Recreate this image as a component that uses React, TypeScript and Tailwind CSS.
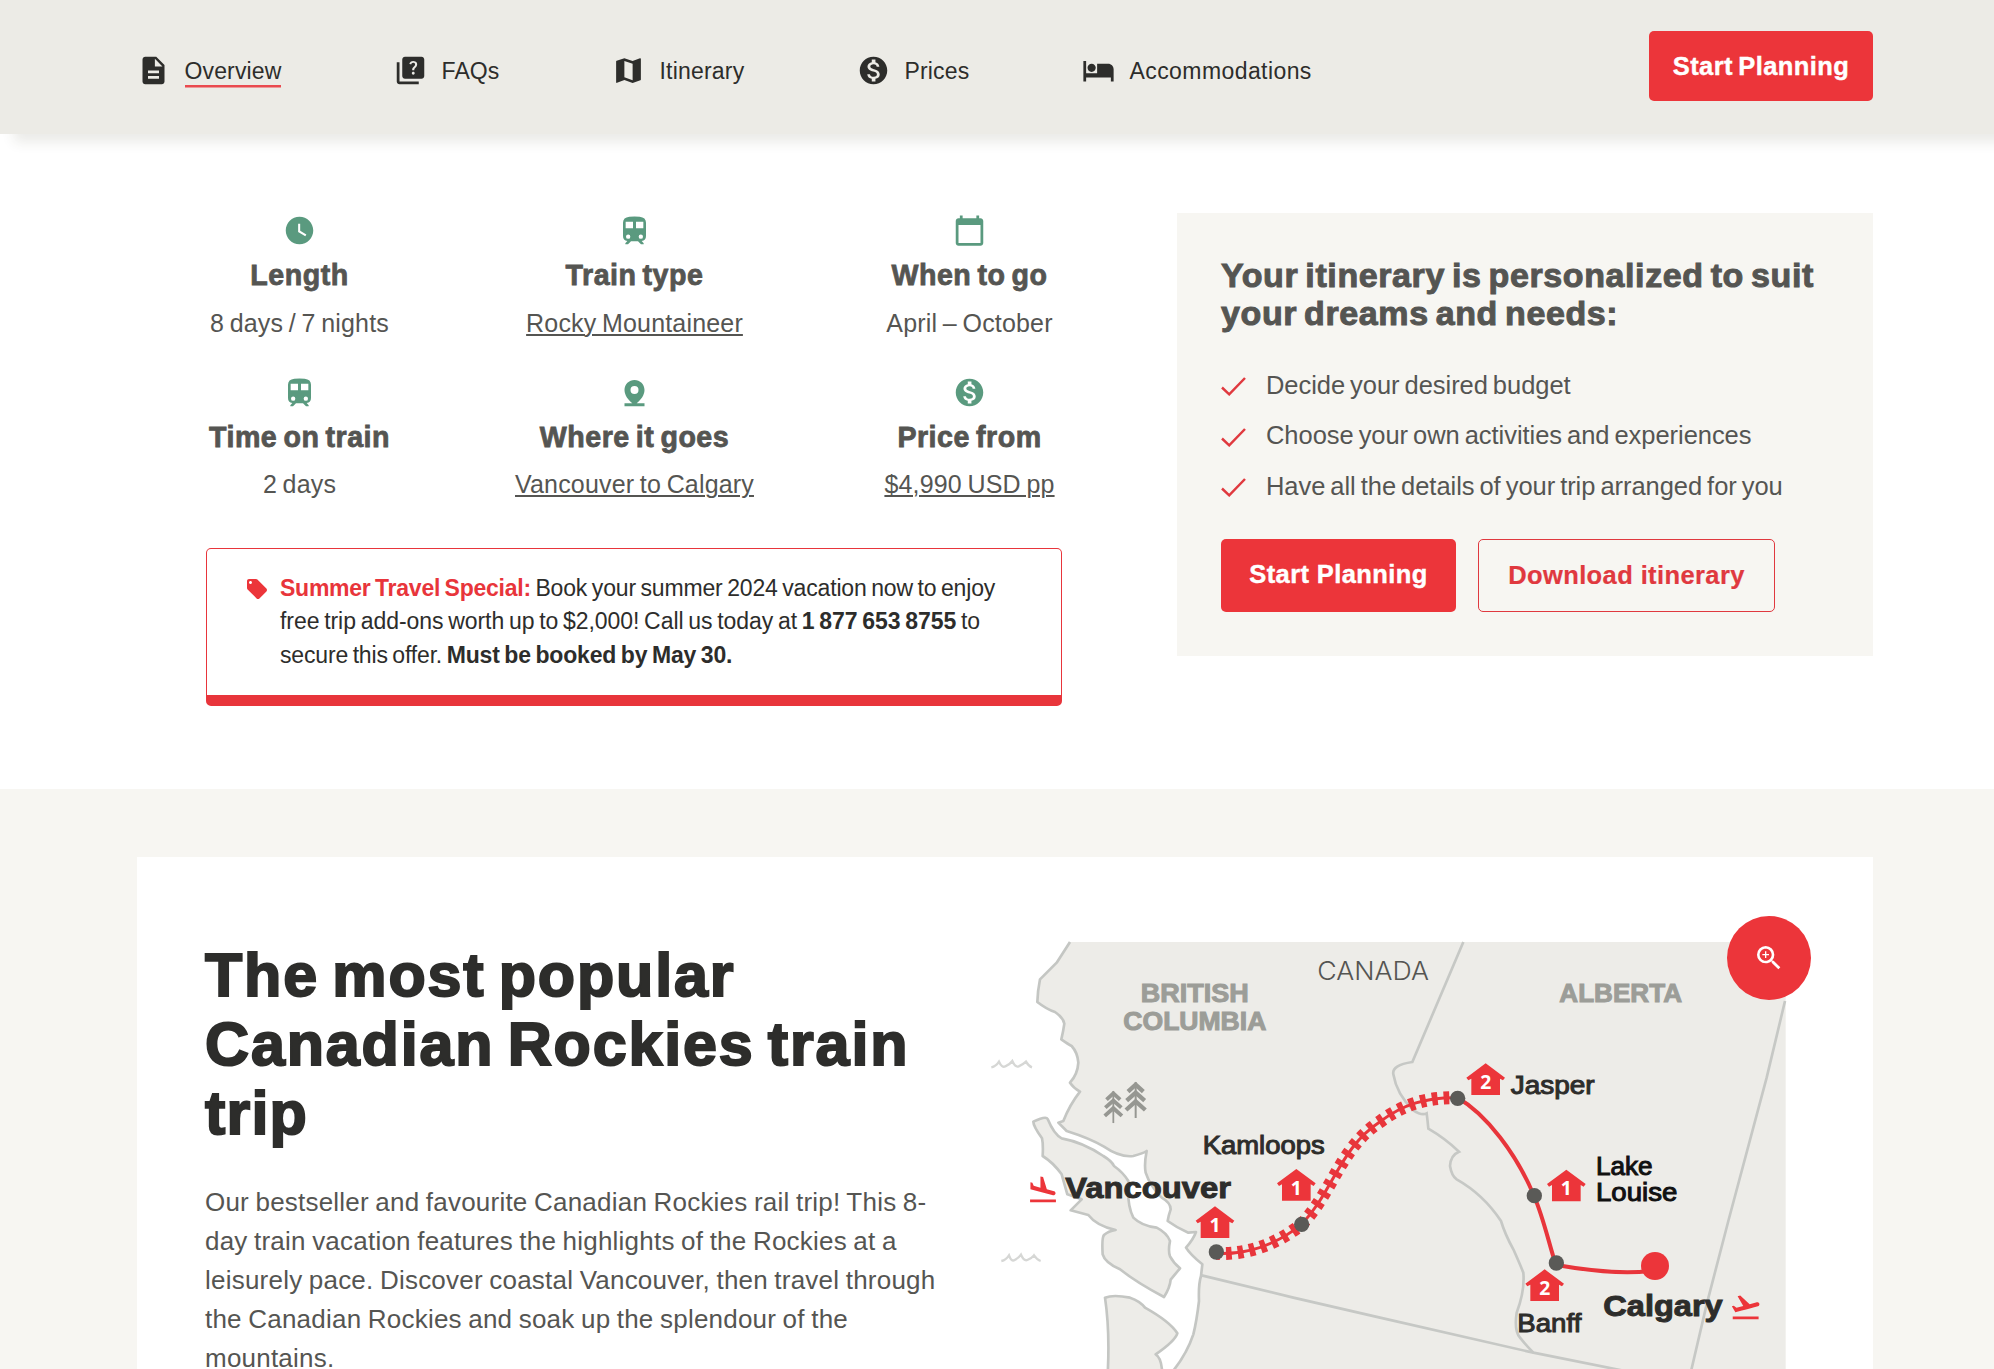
import {
  MdDescription, MdQuiz, MdMap, MdMonetizationOn, MdHotel, MdWatchLater,
  MdCalendarToday, MdLocalOffer, MdZoomIn, MdFlightLand, MdFlightTakeoff,
} from "react-icons/md";

const navItems = [
  { Icon: MdDescription, label: "Overview", cls: "tracking-[0.14px] shadow-[0_2.5px_0_#ea4a4f]" },
  { Icon: MdQuiz, label: "FAQs", cls: "tracking-[0.12px]" },
  { Icon: MdMap, label: "Itinerary", cls: "tracking-[0.2px]" },
  { Icon: MdMonetizationOn, label: "Prices", cls: "tracking-[0.2px]" },
  { Icon: MdHotel, label: "Accommodations", cls: "tracking-[0.42px]" },
];

function TrainIcon({ className }: { className?: string }) {
  return (
    <svg className={className} viewBox="0 0 99 99">
      <path
        fill="currentColor"
        fillRule="evenodd"
        d="M34 8 Q49.5 7 65 8 Q84 10 84 26 V66 Q84 80 71 81 L77 88 V91 H69 L60 82 H39 L30 91 H22 V88 L28 81 Q15 80 15 66 V26 Q15 10 34 8 Z M23 23 V43 H45 V23 Z M54 23 V43 H76 V23 Z M24 68 a6.5 6.5 0 1 0 13 0 a6.5 6.5 0 1 0 -13 0 Z M62 68 a6.5 6.5 0 1 0 13 0 a6.5 6.5 0 1 0 -13 0 Z"
      />
    </svg>
  );
}

function PinIcon({ className }: { className?: string }) {
  return (
    <svg className={className} viewBox="0 0 99 99">
      <path
        fill="currentColor"
        fillRule="evenodd"
        d="M49.5 12 C66 12 79.5 25 79.5 42 C79.5 58 68 72 56 82 H79.5 V91 H19.5 V82 H43 C31 72 19.5 58 19.5 42 C19.5 25 33 12 49.5 12 Z M37.5 42 a12 12 0 1 0 24 0 a12 12 0 1 0 -24 0 Z"
      />
    </svg>
  );
}

const facts = [
  { Icon: MdWatchLater, title: "Length", value: "8 days / 7 nights", link: false },
  { Icon: TrainIcon, title: "Train type", value: "Rocky Mountaineer", link: true },
  { Icon: MdCalendarToday, title: "When to go", value: "April – October", link: false },
  { Icon: TrainIcon, title: "Time on train", value: "2 days", link: false },
  { Icon: PinIcon, title: "Where it goes", value: "Vancouver to Calgary", link: true },
  { Icon: MdMonetizationOn, title: "Price from", value: "$4,990 USD pp", link: true },
];

const perks = [
  "Decide your desired budget",
  "Choose your own activities and experiences",
  "Have all the details of your trip arranged for you",
];

const COAST =
  "M270 123 L230 185 L180 235 Q173 270 172 303 Q200 325 225 333 Q250 350 253 368 Q250 390 244 415 Q265 430 275 435 Q293 455 295 485 Q293 520 270 545 Q280 560 300 572 Q270 610 250 660 L235 665 L260 690 Q330 712 372 737 Q420 770 460 765 Q490 757 500 750 Q492 790 497 815 Q510 855 545 890 Q572 905 572 925 Q565 945 563 960 Q590 980 625 995 L648 993 Q640 1015 618 1040 Q630 1060 667 1090 L663 1125 Q655 1150 657 1200 Q650 1260 640 1300 Q620 1360 575 1415";

const RAIL =
  "M709 1057 C800 1062 890 1030 965 970 C1060 870 1080 740 1200 662 C1270 610 1340 588 1433 590";

function House({ x, y, n }: { x: number; y: number; n: string }) {
  return (
    <g transform={`translate(${x} ${y})`}>
      <path d="M0 0 L58 43 L52 51 L43 46 V95 H-43 V46 L-52 51 L-58 43 Z" fill="#ec353a" />
      <text x="0" y="77" textAnchor="middle" fontSize="58" fontWeight="700" fill="#fff" fontFamily="Noto Sans, sans-serif">{n}</text>
    </g>
  );
}

function Tree({ x, y, s }: { x: number; y: number; s: number }) {
  return (
    <g transform={`translate(${x} ${y}) scale(${s})`} stroke="#969792" fill="none">
      <path d="M0 0 V108" strokeWidth="6" />
      <path d="M-23 29 L0 8 L23 29 M-27 56 L0 32 L27 56 M-29 84 L0 58 L29 84" strokeWidth="13" />
    </g>
  );
}

function RouteMap() {
  return (
    <svg className="block h-[469px] w-[840px]" viewBox="0 0 2520 1407" fontFamily="Liberation Sans, sans-serif">
      <g fill="#edece8" stroke="#c4c6c3" strokeWidth="8" strokeLinejoin="round">
        <path stroke="none" d={`${COAST} H2417 V123 Z`} />
        <path fill="none" d={COAST} />
        <path d="M160 662 Q198 644 203 654 Q222 700 245 712 Q310 724 370 765 Q395 780 402 795 Q430 815 445 840 Q440 910 460 950 Q485 975 530 980 Q560 995 570 1020 Q564 1050 570 1066 Q580 1085 600 1102 Q585 1120 572 1136 Q570 1160 552 1188 Q470 1145 420 1105 Q375 1085 368 1060 Q365 1010 372 1002 Q385 990 407 987 Q350 975 325 942 L272 928 L305 895 L262 880 L245 820 Q220 785 188 765 Q190 730 186 712 Q160 675 160 662 Z" />
        <path d="M383 1420 Q390 1290 375 1190 Q400 1180 450 1190 Q480 1200 495 1220 Q570 1262 592 1297 Q585 1320 527 1360 Q545 1370 547 1420" />
      </g>
      <g fill="none" stroke="#c6c8c5" strokeWidth="8">
        <path d="M665 1123 L940 1190 L1200 1250 L1660 1355 L1940 1411" />
        <path d="M1450 123 L1297 483 Q1235 492 1240 520 Q1250 580 1300 628 Q1325 645 1340 637 Q1343 660 1345 683 Q1395 712 1437 752 Q1412 762 1410 795 Q1415 825 1430 835 Q1510 880 1563 960 Q1575 1000 1600 1045 Q1620 1090 1630 1115 Q1635 1170 1610 1235 Q1602 1290 1620 1310 Q1640 1335 1660 1355" />
        <path d="M2415 300 L2360 530 L2245 960 L2180 1210 L2133 1411" />
      </g>
      <g fill="none" stroke="#d6d7d5" strokeWidth="7">
        <path d="M34 499 Q48 496 57 482 Q66 502 76 496 Q90 490 97 480 Q106 500 116 496 Q130 490 138 482 Q146 496 156 499" />
        <path d="M64 1080 Q78 1077 87 1063 Q94 1083 104 1077 Q116 1071 123 1061 Q132 1081 142 1077 Q156 1071 162 1063 Q172 1077 182 1080" />
      </g>
      <Tree x={400} y={570} s={0.89} />
      <Tree x={467} y={543} s={1} />

      <path d={RAIL} fill="none" stroke="#e8353b" strokeWidth="9" />
      <path d={RAIL} fill="none" stroke="#e8353b" strokeWidth="39" strokeDasharray="17 18.2" strokeDashoffset="-29" />
      <path d="M1433 590 C1520 640 1610 760 1662 884 C1690 950 1705 1020 1724 1080 M1729 1092 C1820 1108 1930 1120 2010 1110" fill="none" stroke="#e8353b" strokeWidth="12" />
      <g fill="#5a5a57">
        <circle cx="709" cy="1053" r="23" />
        <circle cx="965" cy="970" r="23" />
        <circle cx="1433" cy="592" r="23" />
        <circle cx="1663" cy="884" r="23" />
        <circle cx="1729" cy="1086" r="23" />
      </g>
      <circle cx="2025" cy="1095" r="42" fill="#ec353a" />
      <House x={705} y={916} n="1" />
      <House x={949} y={804} n="1" />
      <House x={1517} y={487} n="2" />
      <House x={1759} y={806} n="1" />
      <House x={1694} y={1105} n="2" />
      <MdFlightLand x={140} y={818} size={98} color="#ec353a" />
      <MdFlightTakeoff x={2248} y={1169} size={98} color="#ec353a" />

      <g fill="#9c9d98" stroke="#9c9d98" strokeWidth="3" fontWeight="700" fontSize="76">
        <text x="482" y="303" textLength="324" lengthAdjust="spacingAndGlyphs">BRITISH</text>
        <text x="430" y="387" textLength="429" lengthAdjust="spacingAndGlyphs">COLUMBIA</text>
        <text x="1738" y="303" textLength="368" lengthAdjust="spacingAndGlyphs">ALBERTA</text>
      </g>
      <text x="1012" y="236" fontSize="75" fontWeight="300" fontFamily="Inter, sans-serif" fill="#555552" textLength="335" lengthAdjust="spacingAndGlyphs">CANADA</text>
      <g fill="#2d2d2b" fontSize="76" stroke="#2d2d2b" strokeWidth="3">
        <text x="668" y="759" textLength="366" lengthAdjust="spacingAndGlyphs">Kamloops</text>
        <text x="1592" y="578" textLength="252" lengthAdjust="spacingAndGlyphs">Jasper</text>
        <text x="1612" y="1292" textLength="192" lengthAdjust="spacingAndGlyphs">Banff</text>
        <g fill="#111" stroke="#111">
          <text x="1848" y="823" textLength="170" lengthAdjust="spacingAndGlyphs">Lake</text>
          <text x="1848" y="899" textLength="244" lengthAdjust="spacingAndGlyphs">Louise</text>
        </g>
      </g>
      <g fill="#2d2d2b" fontWeight="700" fontSize="90" stroke="#2d2d2b" strokeWidth="3">
        <text x="256" y="892" textLength="497" lengthAdjust="spacingAndGlyphs">Vancouver</text>
        <text x="1870" y="1245" textLength="358" lengthAdjust="spacingAndGlyphs">Calgary</text>
      </g>
    </svg>
  );
}

export default function App() {
  return (
    <div className="h-[1369px] overflow-hidden bg-white font-['Liberation_Sans',sans-serif] text-[#555552]">
      <header className="relative z-10 flex h-[134px] items-start justify-between bg-[#ecebe6] pr-[121px] pl-[137px] shadow-[14px_8px_12px_rgba(60,60,40,0.11)]">
        <nav className="flex gap-[112.5px] pt-[54px]">
          {navItems.map(({ Icon, label, cls }) => (
            <a key={label} className="flex items-center gap-[14.5px] text-[23px] leading-[28px] text-[#2d2d2b]">
              <Icon className="size-[33px]" />
              <span className={cls}>{label}</span>
            </a>
          ))}
        </nav>
        <button className="mt-[31px] h-[70px] w-[224px] rounded-[5px] bg-[#ec353a] text-[25.5px] font-bold tracking-[0.4px] text-white [-webkit-text-stroke:0.4px] [word-spacing:-2px]">
          Start Planning
        </button>
      </header>

      <section className="flex h-[655px] justify-between pr-[121px] pl-[132px]">
        <div className="w-[1005px] pt-[80px]">
          <div className="grid grid-cols-3 gap-y-[36.3px]">
            {facts.map(({ Icon, title, value, link }) => (
              <div key={title} className="flex flex-col items-center">
                <Icon className="size-[33px] text-[#5a9a7f]" />
                <h3 className="mt-[11px] text-[28.6px] leading-[34px] font-bold tracking-[0.5px] [-webkit-text-stroke:0.8px] [word-spacing:-2.3px]">{title}</h3>
                <p className={`mt-[13.5px] text-[25px] leading-[34px] tracking-[0.17px] [word-spacing:-1.5px] ${link ? "underline decoration-2 underline-offset-2" : ""}`}>{value}</p>
              </div>
            ))}
          </div>
          <div className="mt-[46.5px] ml-[74px] flex h-[158px] w-[856px] rounded-[5px] border border-b-[11px] border-[#e8353b] pt-[23px] pl-[38px] text-[23px] leading-[33.5px] text-[#2d2d2b]">
            <MdLocalOffer className="mt-[5px] mr-[11px] size-[24px] text-[#ec353a]" />
            <p className="flex flex-col items-start whitespace-nowrap [word-spacing:-1.6px]">
              <span className="tracking-[-0.17px]">
                <b className="tracking-[-0.25px] text-[#e8353b]">Summer Travel Special:</b> Book your summer 2024 vacation now to enjoy
              </span>
              <span className="tracking-[-0.05px]">
                free trip add-ons worth up to $2,000! Call us today at <b>1 877 653 8755</b> to
              </span>
              <span className="tracking-[-0.17px]">
                secure this offer. <b>Must be booked by May 30.</b>
              </span>
            </p>
          </div>
        </div>

        <aside className="mt-[79px] h-[443px] w-[696px] bg-[#f7f6f2] px-[44px] pt-[43px]">
          <h2 className="flex flex-col items-start text-[34px] leading-[38px] font-bold tracking-[0.6px] whitespace-nowrap [-webkit-text-stroke:1px] [word-spacing:-3px]">
            <span>Your itinerary is personalized to suit</span>
            <span>your dreams and needs:</span>
          </h2>
          <ul className="mt-[28px] text-[25.5px] leading-[50.4px] tracking-[-0.05px] whitespace-nowrap [word-spacing:-2px]">
            {perks.map((perk) => (
              <li key={perk} className="flex items-center gap-[20px]">
                <svg className="mt-[3px] h-[19px] w-[25px]" viewBox="0 0 25 19">
                  <path d="M1 10.5 L8.2 17.3 L24 1" fill="none" stroke="#e0393f" strokeWidth="2.5" />
                </svg>
                <span>{perk}</span>
              </li>
            ))}
          </ul>
          <div className="mt-[28px] flex gap-[22px] text-[25.5px] font-bold tracking-[0.4px] [word-spacing:-2px]">
            <button className="h-[73px] w-[235px] rounded-[5px] bg-[#ec353a] pb-[3px] text-white [-webkit-text-stroke:0.4px]">Start Planning</button>
            <button className="h-[73px] w-[297px] rounded-[5px] border border-[#e0393f] pb-[1px] text-[#e0393f] [-webkit-text-stroke:0.2px]">Download itinerary</button>
          </div>
        </aside>
      </section>

      <section className="h-[580px] bg-[#f7f6f2] pt-[68px] pr-[121px] pl-[137px]">
        <div className="flex h-[512px] bg-white pl-[68px]">
          <div className="w-[775px] pt-[84.4px] whitespace-nowrap">
            <h1 className="flex flex-col items-start text-[61px] leading-[69px] font-bold tracking-[1.85px] text-[#2d2d2b] [-webkit-text-stroke:2px] [word-spacing:-5.5px]">
              <span>The most popular</span>
              <span>Canadian Rockies train</span>
              <span className="tracking-[1.2px]">trip</span>
            </h1>
            <p className="mt-[34.6px] flex flex-col items-start text-[26px] leading-[39.1px] tracking-[0.22px] [word-spacing:-1px]">
              <span>Our bestseller and favourite Canadian Rockies rail trip! This 8-</span>
              <span>day train vacation features the highlights of the Rockies at a</span>
              <span>leisurely pace. Discover coastal Vancouver, then travel through</span>
              <span>the Canadian Rockies and soak up the splendour of the</span>
              <span>mountains.</span>
            </p>
          </div>
          <div className="relative mt-[44px]">
            <RouteMap />
            <button className="absolute top-[15px] left-[747px] flex size-[84px] items-center justify-center rounded-full bg-[#ec353a] text-white">
              <MdZoomIn className="size-[32px]" />
            </button>
          </div>
        </div>
      </section>
    </div>
  );
}
